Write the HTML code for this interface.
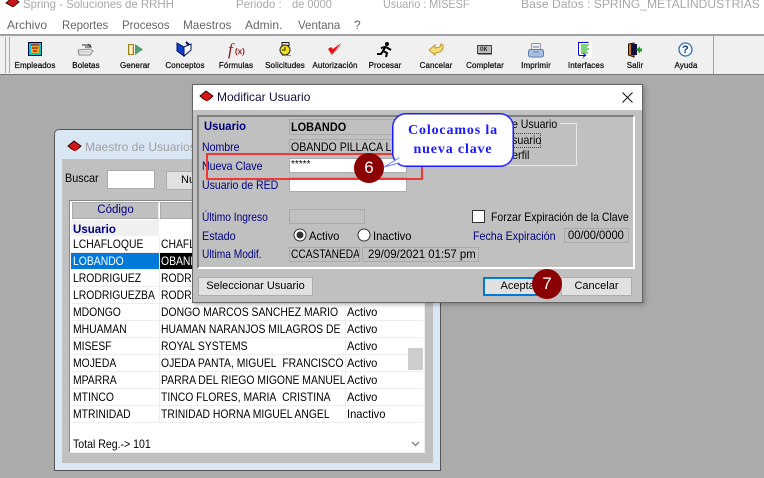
<!DOCTYPE html>
<html><head><meta charset="utf-8">
<style>
html,body{margin:0;padding:0}
body{width:764px;height:478px;overflow:hidden;position:relative;background:#fff;font-family:"Liberation Sans",sans-serif;font-size:12px;color:#000}
.a,.t,.c{position:absolute}
.t{white-space:nowrap;line-height:14px;transform-origin:0 0;transform:scaleX(var(--s,.88))}
.tb{font-size:8px;font-weight:normal;color:#111;transform:translateX(-50%);top:61px;line-height:10px;letter-spacing:.1px;-webkit-text-stroke:.25px #111}
.blue{color:#000080}
.box{position:absolute;box-sizing:border-box}
.ro{background:#c0c0c0;border:1px solid #aaa;box-sizing:border-box;position:absolute;overflow:hidden;white-space:nowrap;line-height:15px;padding-left:1px}
.ro i{font-style:normal;display:inline-block;transform-origin:0 0;transform:scaleX(var(--s,.88))}
.in{background:#fff;border:1px solid #aaa;box-sizing:border-box;position:absolute}
.btn{position:absolute;box-sizing:border-box;background:#e1e1e1;border:1px solid #adadad;text-align:center;line-height:17px;font-size:11px}
.row{position:absolute;left:71px;width:352px;height:17px;background:#fff;border-bottom:1px solid #eee;box-sizing:border-box;line-height:15px;white-space:nowrap;overflow:hidden}
.row span{position:absolute;top:1px;overflow:hidden;transform-origin:0 0;transform:scaleX(.865)}
.s1{left:2px;width:100px}.s2{left:90px;width:214px}.s3{left:276px;transform:scaleX(.93)!important}
.vl{position:absolute;width:1px;background:#eee}
svg{position:absolute;overflow:visible}
</style></head><body>

<svg style="left:5px;top:-3px" width="15" height="11" viewBox="0 0 15 11"><path d="M1 6L8 0l6 5-6 5z" fill="#c81818" stroke="#300" stroke-width=".9"/><path d="M4 9l4 2 6-4" stroke="#fff" fill="none"/></svg>
<div class="t" style="left:23px;top:-3px;color:#a8a8a8;--s:.95">Spring - Soluciones de RRHH</div>
<div class="t" style="left:236px;top:-3px;color:#a8a8a8;--s:.95">Periodo :</div>
<div class="t" style="left:292px;top:-3px;color:#a8a8a8;--s:.92">de 0000</div>
<div class="t" style="left:383px;top:-3px;color:#a8a8a8;--s:.9">Usuario : MISESF</div>
<div class="t" style="left:521px;top:-3px;color:#a8a8a8;--s:1.01">Base Datos : SPRING_METALINDUSTRIAS</div>

<div class="t" style="left:7px;top:18px;color:#666;--s:1">Archivo</div>
<div class="t" style="left:62px;top:18px;color:#666;--s:.95">Reportes</div>
<div class="t" style="left:122px;top:18px;color:#666;--s:.95">Procesos</div>
<div class="t" style="left:183px;top:18px;color:#666;--s:.98">Maestros</div>
<div class="t" style="left:245px;top:18px;color:#666;--s:1">Admin.</div>
<div class="t" style="left:298px;top:18px;color:#666;--s:.96">Ventana</div>
<div class="t" style="left:354px;top:18px;color:#666;--s:1">?</div>

<div class="a" style="left:0;top:34px;width:764px;height:2px;background:#a0a0a0"></div>
<div class="a" style="left:0;top:36px;width:764px;height:38px;background:#f0f0f0"></div>
<div class="a" style="left:5px;top:37px;width:3px;height:36px;border-left:1px solid #aaa;border-right:1px solid #aaa"></div>
<div class="a" style="left:713px;top:36px;width:1px;height:38px;background:#a0a0a0"></div>

<svg style="left:28px;top:42px" width="14" height="14"><rect x=".5" y=".5" width="13" height="13" fill="#00c8d8" stroke="#003"/><rect x="3" y="3" width="8" height="8" fill="#e8b020"/><path d="M3 3h8M4 6h6M5 9h4" stroke="#c02020" stroke-width="1.6"/></svg>
<svg style="left:77px;top:42px" width="17" height="15"><path d="M1 8l12-1 3 2-3 4H2z" fill="#eee" stroke="#888"/><path d="M5 3h9M8 5h6l-3-3" stroke="#333" fill="none"/><path d="M2 10h12" stroke="#bbb"/></svg>
<svg style="left:128px;top:43px" width="16" height="13"><rect x=".5" y="1.500" width="5" height="10" fill="#e8d080" stroke="#a08020"/><rect x="2" y="2" width="2" height="9" fill="#fff8d0"/><path d="M7 1l8 5.500-8 5.500z" fill="#50a070"/></svg>
<svg style="left:176px;top:41px" width="16" height="16"><path d="M1 2l7 4v9L1 10z" fill="#1040d0" stroke="#001060"/><path d="M8 6l7-3v6l-7 6z" fill="#fff" stroke="#001060"/><path d="M10 1l3 3" stroke="#001060" stroke-width="2"/></svg>
<div class="t" style="left:228px;top:41px;font:italic 17px/18px 'Liberation Serif',serif;color:#8a1c1c;--s:1">f</div>
<div class="t" style="left:235px;top:47px;font:bold 8px/10px 'Liberation Sans',sans-serif;color:#8a1c1c;--s:1">(x)</div>
<svg style="left:279px;top:42px" width="13" height="15"><rect x="3" y="0.500" width="7" height="3" fill="#ddd" stroke="#222"/><circle cx="6" cy="8" r="5" fill="#f0e020" stroke="#222"/><path d="M6 5v3H3" stroke="#222" fill="none"/><path d="M3 13.500h9" stroke="#888"/></svg>
<svg style="left:327px;top:42px" width="15" height="14"><path d="M1 7l4 6L14 1 6 7 4 5z" fill="#e81010"/><path d="M5 13l9-10" stroke="#bbb"/></svg>
<svg style="left:377px;top:42px" width="16" height="15"><circle cx="10" cy="2" r="2" fill="#000"/><path d="M9 4L6 9l4 2-1 4M9 5l5 3M8 5L4 6M6 9l-2 3H0" stroke="#000" stroke-width="2" fill="none"/></svg>
<svg style="left:428px;top:42px" width="16" height="15"><path d="M1 8l6-5v3l5-1 1-3 2 1v4l-3 3-5 1v2z" fill="#f5dc78" stroke="#c09830"/></svg>
<svg style="left:477px;top:45px" width="15" height="10"><rect x=".5" y=".5" width="14" height="8" fill="#bbb" stroke="#444"/><path d="M1 9h14" stroke="#222"/></svg>
<div class="t" style="left:480px;top:45px;font:bold 6px/9px 'Liberation Mono',monospace;color:#333;--s:1">OK</div>
<svg style="left:528px;top:43px" width="16" height="15"><rect x="3.500" y=".5" width="9" height="7" fill="#f0f0f0" stroke="#99a"/><rect x=".5" y="6.500" width="15" height="7.500" rx="2" fill="#a8c0e0" stroke="#6080b0"/><path d="M5 4h6M5 9h6" stroke="#6080b0"/></svg>
<svg style="left:577px;top:42px" width="15" height="16"><rect width="15" height="16" fill="#fff"/><path d="M1.500 13V.5h10" stroke="#0000e0" fill="none"/><path d="M4 3h8M4 5h6M4 7h8M4 9h6M4 11h7" stroke="#00a000"/><path d="M1.500 13.500h7l-2-2M8 13.500l-2 2" stroke="#0000e0" fill="none"/></svg>
<svg style="left:628px;top:43px" width="15" height="15"><path d="M.5 1L6 0v14l-5.500-2z" fill="#c87818" stroke="#301800"/><rect x="3" y="1" width="6" height="11" fill="#101040"/><path d="M8 6.500l4-3v2h2v3h-2v2z" fill="#20a020"/></svg>
<svg style="left:678px;top:42px" width="15" height="15"><circle cx="7.500" cy="7.500" r="6.500" fill="#f4f8ff" stroke="#3070b0" stroke-width="1.300"/></svg>
<div class="t" style="left:682px;top:44px;font:bold 11px/12px 'Liberation Sans',sans-serif;color:#103878;--s:1">?</div>

<div class="t tb" style="left:35px">Empleados</div>
<div class="t tb" style="left:86px">Boletas</div>
<div class="t tb" style="left:135px">Generar</div>
<div class="t tb" style="left:185px">Conceptos</div>
<div class="t tb" style="left:236px">Fórmulas</div>
<div class="t tb" style="left:285px">Solicitudes</div>
<div class="t tb" style="left:335px">Autorización</div>
<div class="t tb" style="left:385px">Procesar</div>
<div class="t tb" style="left:436px">Cancelar</div>
<div class="t tb" style="left:485px">Completar</div>
<div class="t tb" style="left:536px">Imprimir</div>
<div class="t tb" style="left:586px">Interfaces</div>
<div class="t tb" style="left:635px">Salir</div>
<div class="t tb" style="left:686px">Ayuda</div>

<div class="a" style="left:0;top:74px;width:764px;height:404px;background:#ababab;border-top:1px solid #777;box-sizing:border-box"></div>

<!-- Master window -->
<div class="box" style="left:54px;top:129px;width:387px;height:342px;background:#d9e6f3;border:1px solid #555;border-radius:5px 5px 0 0"></div>
<svg style="left:68px;top:141px" width="13" height="12" viewBox="0 0 13 12"><path d="M0 5l6-5 7 5-6 6z" fill="#d01818" stroke="#300" stroke-width=".9"/><path d="M3 9l4 2 6-4" stroke="#fff" fill="none"/></svg>
<div class="t" style="left:85px;top:140px;color:#a0a0a0;--s:1">Maestro de Usuarios</div>
<div class="a" style="left:62px;top:159px;width:371px;height:304px;background:#c0c0c0"></div>
<div class="t" style="left:65px;top:171px;--s:.9">Buscar</div>
<div class="in" style="left:107px;top:170px;width:48px;height:19px"></div>
<div class="btn" style="left:166px;top:171px;width:40px;height:19px;text-align:left;padding-left:14px">Nu</div>

<div class="a" style="left:69px;top:200px;width:356px;height:253px;background:#fff;border:1px solid #888;border-right-color:#eee;border-bottom-color:#eee;box-sizing:border-box"></div>
<div class="a" style="left:72px;top:202px;width:87px;height:17px;background:#c0c0c0;border:1px solid #aaa;border-right-color:#eee;box-sizing:border-box;text-align:center;line-height:15px;color:#000080;font-size:11.500px">Código</div>
<div class="a" style="left:160px;top:202px;width:186px;height:17px;background:#c0c0c0;border:1px solid #aaa;box-sizing:border-box"></div>
<div class="a" style="left:347px;top:202px;width:76px;height:17px;background:#c0c0c0;border:1px solid #aaa;box-sizing:border-box"></div>
<div class="a" style="left:71px;top:220px;width:88px;height:16px;background:#f0f0f0"></div>
<div class="a" style="left:160px;top:220px;width:263px;height:16px;background:#fff"></div>
<div class="t" style="left:73px;top:222px;font-weight:bold;color:#000080;--s:.96">Usuario</div>

<div class="row" style="top:236px"><span class="s1">LCHAFLOQUE</span><span class="s2">CHAFLOQUE</span></div>
<div class="a" style="left:71px;top:253px;width:88px;height:16px;background:#0078d7"></div>
<div class="a" style="left:160px;top:253px;width:40px;height:16px;background:#000"></div>
<div class="t" style="left:73px;top:254px;color:#fff;--s:.865">LOBANDO</div>
<div class="t" style="left:161px;top:254px;color:#fff;--s:.865">OBANDO</div>
<div class="row" style="top:270px"><span class="s1">LRODRIGUEZ</span><span class="s2">RODRIGUEZ</span></div>
<div class="row" style="top:287px"><span class="s1">LRODRIGUEZBA</span><span class="s2">RODRIGUEZ</span></div>
<div class="row" style="top:304px"><span class="s1">MDONGO</span><span class="s2">DONGO MARCOS SANCHEZ MARIO</span><span class="s3">Activo</span></div>
<div class="row" style="top:321px"><span class="s1">MHUAMAN</span><span class="s2">HUAMAN NARANJOS MILAGROS DE</span><span class="s3">Activo</span></div>
<div class="row" style="top:338px"><span class="s1">MISESF</span><span class="s2">ROYAL SYSTEMS</span><span class="s3">Activo</span></div>
<div class="row" style="top:355px"><span class="s1">MOJEDA</span><span class="s2">OJEDA PANTA, MIGUEL&nbsp; FRANCISCO</span><span class="s3">Activo</span></div>
<div class="row" style="top:372px"><span class="s1">MPARRA</span><span class="s2">PARRA DEL RIEGO MIGONE MANUEL</span><span class="s3">Activo</span></div>
<div class="row" style="top:389px"><span class="s1">MTINCO</span><span class="s2">TINCO FLORES, MARIA&nbsp; CRISTINA</span><span class="s3">Activo</span></div>
<div class="row" style="top:406px"><span class="s1">MTRINIDAD</span><span class="s2">TRINIDAD HORNA MIGUEL ANGEL</span><span class="s3">Inactivo</span></div>
<div class="vl" style="left:159px;top:236px;height:186px"></div>
<div class="vl" style="left:345px;top:236px;height:186px"></div>
<div class="t" style="left:73px;top:437px">Total Reg.-&gt; 101</div>
<div class="a" style="left:408px;top:348px;width:15px;height:22px;background:#cdcdcd"></div>
<svg style="left:411px;top:441px" width="9" height="6"><path d="M1 1l3.500 3.500L8 1" stroke="#888" stroke-width="1.500" fill="none"/></svg>

<!-- Dialog -->
<div class="box" style="left:192px;top:84px;width:451px;height:219px;background:#c0c0c0;border:1px solid #666;box-shadow:2px 2px 4px rgba(0,0,0,.25)"></div>
<div class="a" style="left:193px;top:85px;width:449px;height:25px;background:#fff"></div>
<svg style="left:200px;top:91px" width="13" height="12" viewBox="0 0 13 12"><path d="M0 5l6-5 7 5-6 6z" fill="#d01818" stroke="#300" stroke-width=".9"/><path d="M3 9l4 2 6-4" stroke="#fff" fill="none"/></svg>
<div class="t" style="left:217px;top:90px;color:#101040;--s:1">Modificar Usuario</div>
<svg style="left:622px;top:92px" width="11" height="11"><path d="M.5.5l10 10M10.500.5l-10 10" stroke="#111" stroke-width="1"/></svg>

<div class="box" style="left:197px;top:115px;width:438px;height:154px;border:2px solid;border-color:#808080 #fff #fff #808080"></div>
<div class="box" style="left:500px;top:123px;width:77px;height:43px;border:1px solid #e8e8e8"></div>
<div class="a" style="left:510px;top:118px;width:50px;height:12px;background:#c0c0c0"></div>
<div class="t" style="left:512px;top:117px">e Usuario</div>
<div class="box" style="left:505px;top:133px;width:36px;height:15px;border:1px dotted #444"></div>
<div class="t" style="left:512px;top:133px;--s:.9">suario</div>
<div class="t" style="left:512px;top:148px;--s:.9">erfil</div>

<div class="t blue" style="left:204px;top:119px;font-weight:bold;--s:.94">Usuario</div>
<div class="ro" style="left:289px;top:119px;width:115px;height:16px;font-weight:bold;line-height:14px"><i style="--s:.91">LOBANDO</i></div>
<div class="t blue" style="left:202px;top:140px">Nombre</div>
<div class="ro" style="left:289px;top:139px;width:115px;height:16px;line-height:14px"><i>OBANDO PILLACA LUIS</i></div>
<div class="t blue" style="left:202px;top:159px">Nueva Clave</div>
<div class="in" style="left:289px;top:158px;width:118px;height:15px;font-size:10px;line-height:12px;padding-left:1px">*****</div>
<div class="t blue" style="left:202px;top:178px">Usuario de RED</div>
<div class="in" style="left:289px;top:177px;width:118px;height:15px"></div>
<div class="t blue" style="left:202px;top:210px;--s:.85">Último Ingreso</div>
<div class="ro" style="left:289px;top:209px;width:76px;height:15px"></div>
<div class="t blue" style="left:202px;top:229px;--s:.9">Estado</div>
<svg style="left:293px;top:228px" width="14" height="14"><circle cx="7" cy="7" r="6" fill="#fff" stroke="#333"/><circle cx="7" cy="7" r="3.500" fill="#333"/></svg>
<div class="t" style="left:309px;top:229px;--s:.93">Activo</div>
<svg style="left:357px;top:228px" width="14" height="14"><circle cx="7" cy="7" r="6" fill="#fff" stroke="#333"/></svg>
<div class="t" style="left:373px;top:229px;--s:.93">Inactivo</div>
<div class="t blue" style="left:202px;top:247px;--s:.85">Ultima Modif.</div>
<div class="ro" style="left:289px;top:247px;width:71px;height:15px;line-height:13px"><i style="--s:.85">CCASTANEDA</i></div>
<div class="ro" style="left:362px;top:247px;width:117px;height:15px;line-height:13px;padding-left:5px"><i style="--s:.95">29/09/2021 01:57 pm</i></div>

<div class="in" style="left:472px;top:210px;width:13px;height:13px;border-color:#333"></div>
<div class="t" style="left:491px;top:210px;--s:.875">Forzar Expiración de la Clave</div>
<div class="t blue" style="left:473px;top:229px;--s:.89">Fecha Expiración</div>
<div class="ro" style="left:564px;top:228px;width:65px;height:15px;line-height:13px;padding-left:3px"><i style="--s:.93">00/00/0000</i></div>

<div class="btn" style="left:198px;top:277px;width:115px;height:19px">Seleccionar Usuario</div>
<div class="btn" style="left:483px;top:277px;width:73px;height:19px;border:2px solid #0078d7;line-height:15px">Aceptar</div>
<div class="btn" style="left:561px;top:277px;width:71px;height:19px">Cancelar</div>

<!-- Annotations -->
<div class="box" style="left:206px;top:153px;width:217px;height:27px;border:2px solid #f03838"></div>
<div class="box" style="left:392px;top:113px;width:122px;height:54px;background:#fff;border:1px solid #1a1aff;border-radius:14px;box-shadow:inset 0 0 0 .5px #1a1aff;text-align:center;font:bold 14px/18.500px 'Liberation Serif',serif;color:#1a1aff;padding-top:8px;letter-spacing:.85px">Colocamos la<br>nueva clave</div>
<svg style="left:380px;top:150px" width="25" height="20"><path d="M4 17L19 8v5z" fill="#fff" stroke="#6a7cff" stroke-width="1"/><path d="M19.500 8.500v4" stroke="#fff" stroke-width="2"/></svg>
<div class="a" style="left:354px;top:153px;width:30px;height:30px;border-radius:50%;background:#8b0000;color:#fff;text-align:center;font:17px/30px 'Liberation Sans',sans-serif">6</div>
<div class="a" style="left:532px;top:269px;width:30px;height:30px;border-radius:50%;background:#8b0000;color:#fff;text-align:center;font:17px/30px 'Liberation Sans',sans-serif">7</div>
</body></html>
